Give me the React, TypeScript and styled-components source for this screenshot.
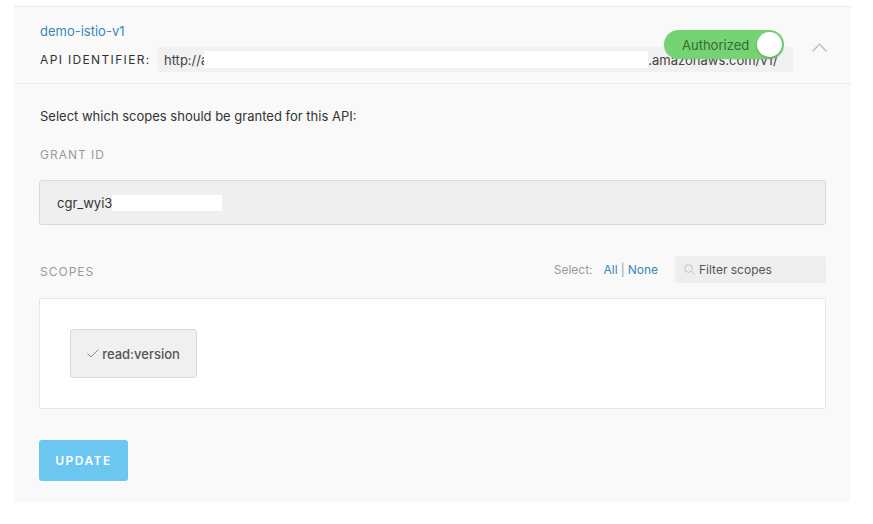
import React from "react";
import styled, { createGlobalStyle } from "styled-components";

const Global = createGlobalStyle`
  html, body { margin: 0; padding: 0; background: #ffffff; }
  body { font-family: Inter, "Open Sans", "Liberation Sans", sans-serif; -webkit-font-smoothing: antialiased; }
  * { box-sizing: border-box; }
`;

const Page = styled.div`
  padding: 6px 22px 0 14px;
`;

const Panel = styled.section`
  width: 837px;
  background: #f9f9f9;
  border-top: 1px solid #ececec;
`;

const Header = styled.header`
  position: relative;
  display: flex;
  align-items: center;
  padding: 15px 24px 11px 26px;
  border-bottom: 1px solid #ebebeb;
`;

const HeaderMain = styled.div`
  flex: 1;
  display: flex;
  flex-direction: column;
  gap: 7px;
`;

const Title = styled.a`
  font-size: 13px;
  line-height: 18px;
  color: #3a88b8;
  text-decoration: none;
`;

const IdRow = styled.div`
  display: flex;
  align-items: center;
`;

const IdLabel = styled.span`
  font-size: 12px;
  letter-spacing: 1.35px;
  color: #333;
  width: 118px;
  flex: none;
`;

const IdBox = styled.div`
  flex: 1;
  height: 25px;
  display: flex;
  align-items: center;
  padding: 0 6px;
  background: #f1f1f1;
  border-radius: 3px;
  font-size: 13px;
  color: #444;
  white-space: nowrap;
  overflow: hidden;
`;

const Redact = styled.span<{ $w: number; $h: number; $ml?: number }>`
  display: inline-block;
  width: ${(p) => p.$w}px;
  height: ${(p) => p.$h}px;
  margin-left: ${(p) => p.$ml ?? 0}px;
  background: #ffffff;
  flex: none;
`;

const Chevron = styled.div`
  width: 15px;
  margin-left: 19px;
  display: flex;
`;

const Toggle = styled.div`
  position: absolute;
  left: 650px;
  top: 23px;
  width: 120px;
  height: 29px;
  border-radius: 15px;
  background: #74d372;
  display: flex;
  align-items: center;
  padding: 0 2px 0 18px;
  box-shadow: 0 1px 2px rgba(0,0,0,0.08);
`;

const ToggleText = styled.span`
  flex: 1;
  font-size: 13px;
  color: #356b34;
`;

const Knob = styled.span`
  width: 25px;
  height: 25px;
  border-radius: 50%;
  background: #fff;
  box-shadow: 0 1px 2px rgba(0,0,0,0.25);
`;

const Body = styled.div`
  padding: 23px 25px 21px 25px;
  display: flex;
  flex-direction: column;
`;

const Intro = styled.p`
  margin: 0 0 0 1px;
  font-size: 13px;
  line-height: 18px;
  color: #333;
`;

const SectionLabel = styled.div<{ $mt: number }>`
  margin: ${(p) => p.$mt}px 0 0 1px;
  font-size: 12px;
  line-height: 18px;
  letter-spacing: 1px;
  color: #999;
`;

const GrantBox = styled.div`
  margin-top: 16px;
  height: 45px;
  display: flex;
  align-items: center;
  padding: 0 17px;
  background: #efefef;
  border: 1px solid #d9d9d9;
  border-radius: 3px;
  font-size: 13px;
  color: #333;
`;

const ScopesHeader = styled.div`
  margin-top: 31px;
  display: flex;
  align-items: center;
  height: 27px;
`;

const ScopesLabel = styled(SectionLabel)`
  flex: 1;
  margin-top: 5px;
`;

const SelectText = styled.span`
  font-size: 12px;
  color: #999;
  margin-right: 11px;
`;

const LinkText = styled.a`
  font-size: 12px;
  color: #3a88b8;
  text-decoration: none;
`;

const Sep = styled.span`
  font-size: 12px;
  color: #999;
  margin: 0 3px;
`;

const Filter = styled.div`
  margin-left: 17px;
  width: 151px;
  height: 27px;
  display: flex;
  align-items: center;
  gap: 4px;
  padding: 0 9px;
  background: #eeeeee;
  border-radius: 2px;
  font-size: 12px;
  color: #555;
`;

const ScopesBox = styled.div`
  margin-top: 15px;
  padding: 30px;
  min-height: 111px;
  background: #fff;
  border: 1px solid #e6e6e6;
  border-radius: 2px;
  display: flex;
  flex-wrap: wrap;
  gap: 10px;
`;

const Chip = styled.div`
  width: 127px;
  height: 49px;
  display: flex;
  align-items: center;
  justify-content: center;
  gap: 3px;
  background: #f0f0f0;
  border: 1px solid #d9d9d9;
  border-radius: 3px;
  font-size: 13px;
  font-weight: 500;
  color: #555;
`;

const UpdateButton = styled.button`
  margin-top: 31px;
  width: 89px;
  height: 41px;
  border: none;
  border-radius: 3px;
  background: #6cc7f0;
  color: #fff;
  font-family: inherit;
  font-size: 12px;
  font-weight: 600;
  letter-spacing: 1.5px;
`;

export default function App() {
  return (
    <>
      <Global />
      <Page>
        <Panel>
          <Header>
            <HeaderMain>
              <Title href="#">demo-istio-v1</Title>
              <IdRow>
                <IdLabel>API IDENTIFIER:</IdLabel>
                <IdBox>
                  http://a
                  <Redact $w={444} $h={17} $ml={-4} />
                  .amazonaws.com/v1/
                </IdBox>
              </IdRow>
            </HeaderMain>
            <Chevron>
              <svg width="15" height="9" viewBox="0 0 15 9" fill="none">
                <path d="M0.5 8.5 L7.5 1 L14.5 8.5" stroke="#b5b5b5" strokeWidth="1.1" />
              </svg>
            </Chevron>
            <Toggle>
              <ToggleText>Authorized</ToggleText>
              <Knob />
            </Toggle>
          </Header>
          <Body>
            <Intro>Select which scopes should be granted for this API:</Intro>
            <SectionLabel $mt={21}>GRANT ID</SectionLabel>
            <GrantBox>
              cgr_wyi3
              <Redact $w={110} $h={16} />
            </GrantBox>
            <ScopesHeader>
              <ScopesLabel $mt={0}>SCOPES</ScopesLabel>
              <SelectText>Select:</SelectText>
              <LinkText href="#">All</LinkText>
              <Sep>|</Sep>
              <LinkText href="#">None</LinkText>
              <Filter>
                <svg width="11" height="11" viewBox="0 0 11 11" fill="none">
                  <circle cx="4.5" cy="4.5" r="3.8" stroke="#c4c4c4" strokeWidth="1" />
                  <path d="M7.3 7.3 L10.4 10.4" stroke="#c4c4c4" strokeWidth="1" />
                </svg>
                Filter scopes
              </Filter>
            </ScopesHeader>
            <ScopesBox>
              <Chip>
                <svg width="12" height="9" viewBox="0 0 12 9" fill="none">
                  <path d="M0.5 4.5 L4 8 L11.5 0.5" stroke="#888" strokeWidth="1" />
                </svg>
                read:version
              </Chip>
            </ScopesBox>
            <UpdateButton>UPDATE</UpdateButton>
          </Body>
        </Panel>
      </Page>
    </>
  );
}
